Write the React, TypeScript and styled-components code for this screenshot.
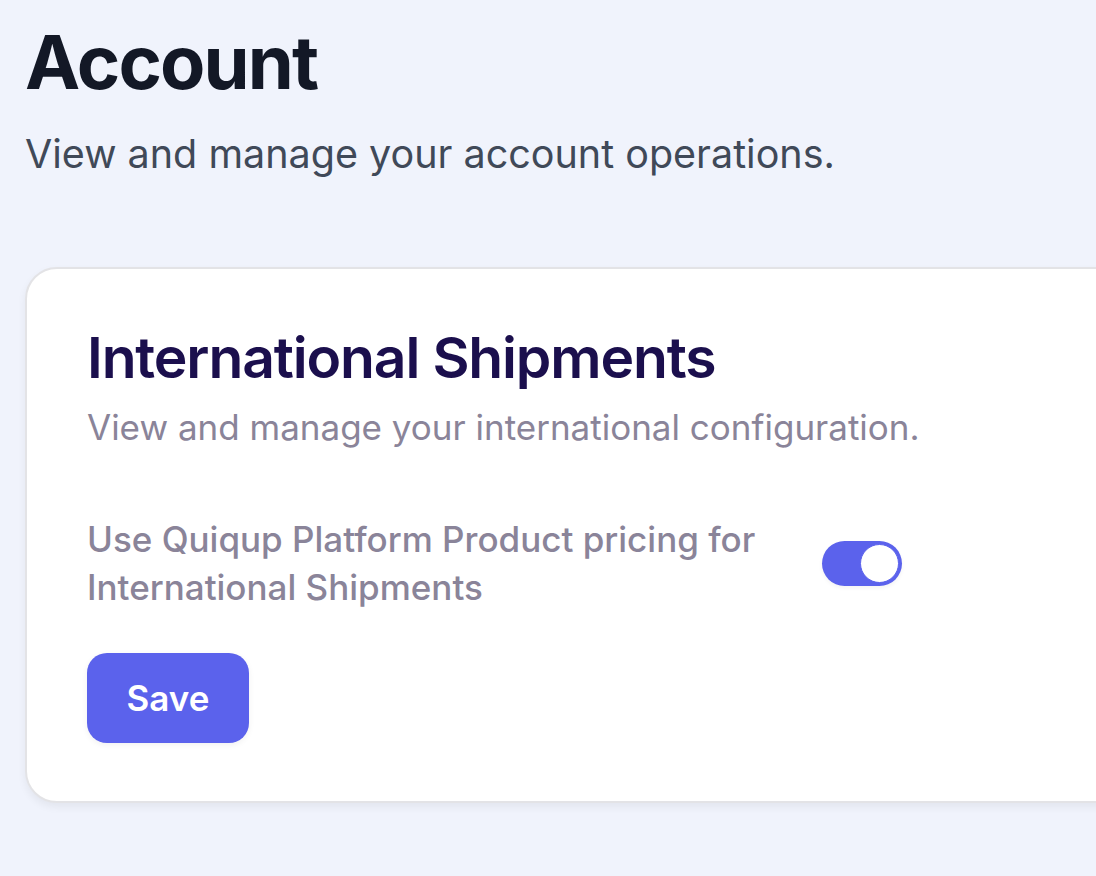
import React, { useState } from 'react';
import styled, { createGlobalStyle } from 'styled-components';

const GlobalStyle = createGlobalStyle`
  html, body {
    margin: 0;
    padding: 0;
    background: #f0f3fc;
    overflow: hidden;
  }
  body {
    font-family: Inter, "Noto Sans", sans-serif;
  }
`;

const Page = styled.div`
  padding: 16px 0 0 25px;
  min-height: 876px;
  box-sizing: border-box;
`;

const Title = styled.h1`
  margin: 0;
  font-size: 74px;
  line-height: 92px;
  font-weight: 700;
  letter-spacing: -0.025em;
  color: #131826;
`;

const Subtitle = styled.p`
  margin: 22px 0 0;
  font-size: 39.5px;
  line-height: 48px;
  color: #404958;
`;

const Card = styled.section`
  margin-top: 89px;
  width: 1140px;
  background: #ffffff;
  border: 2px solid #e3e3e6;
  border-radius: 32px;
  box-shadow: 0 4px 8px rgba(0, 0, 0, 0.06);
  padding: 54px 60px 58px;
  box-sizing: border-box;
`;

const CardTitle = styled.h2`
  margin: 0;
  font-size: 57px;
  line-height: 70px;
  font-weight: 600;
  letter-spacing: -0.02em;
  color: #1b0f4d;
`;

const CardSubtitle = styled.p`
  margin: 12px 0 0;
  font-size: 35px;
  line-height: 44px;
  color: #8a8499;
`;

const SettingRow = styled.div`
  display: flex;
  align-items: center;
  gap: 63px;
  margin-top: 66px;
`;

const SettingLabel = styled.label`
  width: 672px;
  font-size: 35px;
  line-height: 48px;
  font-weight: 500;
  color: #8a8499;
`;

const Switch = styled.button<{ on: boolean }>`
  position: relative;
  flex-shrink: 0;
  width: 80px;
  height: 45px;
  padding: 0;
  border: none;
  border-radius: 23px;
  background: ${p => (p.on ? '#5b62ec' : '#d4d4dc')};
  cursor: pointer;
  box-shadow: 0 2px 4px rgba(0, 0, 0, 0.05);

  &::after {
    content: '';
    position: absolute;
    top: 3px;
    left: ${p => (p.on ? '38px' : '3px')};
    width: 39px;
    height: 39px;
    border-radius: 50%;
    background: #ffffff;
    box-sizing: border-box;
    border: 1.5px solid #5b62ec;
    transition: left 0.2s;
  }
`;

const SaveButton = styled.button`
  display: block;
  margin-top: 42px;
  width: 162px;
  height: 90px;
  border: none;
  border-radius: 20px;
  background: #5b62ec;
  color: #ffffff;
  font-family: inherit;
  font-size: 35px;
  font-weight: 600;
  cursor: pointer;
  box-shadow: 0 2px 6px rgba(0, 0, 0, 0.06);
`;

export default function App() {
  const [usePlatformPricing, setUsePlatformPricing] = useState(true);

  return (
    <>
      <GlobalStyle />
      <Page>
        <Title>Account</Title>
        <Subtitle>View and manage your account operations.</Subtitle>

        <Card>
          <CardTitle>International Shipments</CardTitle>
          <CardSubtitle>View and manage your international configuration.</CardSubtitle>

          <SettingRow>
            <SettingLabel>Use Quiqup Platform Product pricing for International Shipments</SettingLabel>
            <Switch
              on={usePlatformPricing}
              onClick={() => setUsePlatformPricing(v => !v)}
              aria-pressed={usePlatformPricing}
              aria-label="Use Quiqup Platform Product pricing"
            />
          </SettingRow>

          <SaveButton>Save</SaveButton>
        </Card>
      </Page>
    </>
  );
}
